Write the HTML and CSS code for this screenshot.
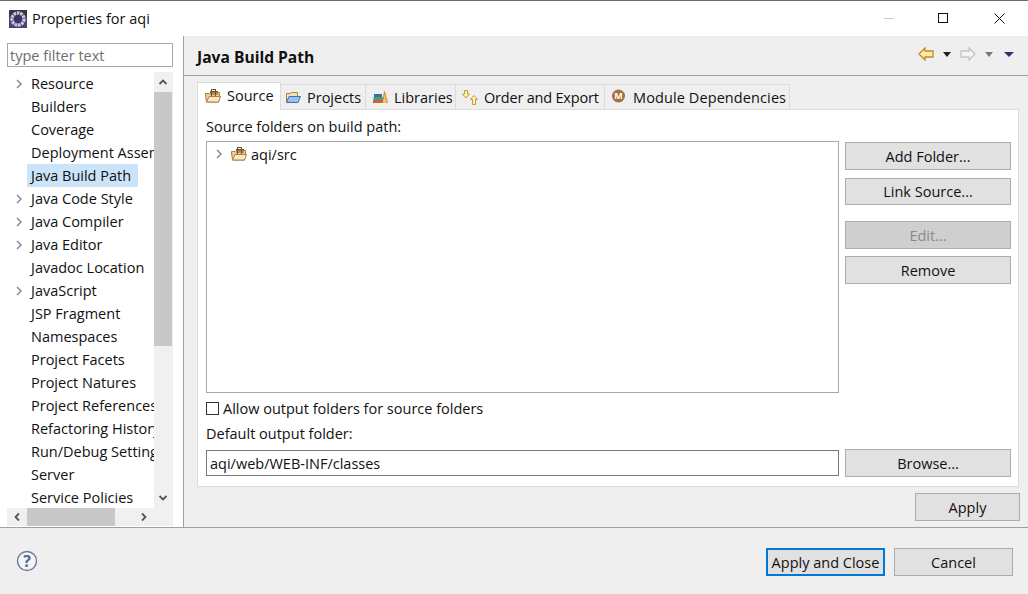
FILE: index.html
```html
<!DOCTYPE html>
<html lang="en">
<head>
<meta charset="utf-8">
<title>Properties for aqi</title>
<link rel="stylesheet" href="styles.css">
</head>
<body>
<svg class="defs" width="0" height="0" aria-hidden="true">
  <symbol id="pkg" viewBox="0 0 16 16">
    <path d="M1.5 14 L.5 7 V5.5 H4 L5 4.5 H14.5 V8 L13.5 14 Z" fill="#edcf96" stroke="#a9803f"/>
    <path d="M1.5 14 L4 8.5 H15.5 L13.5 14 Z" fill="#fae8c4" stroke="#a9803f"/>
    <path d="M6.5 1.5 V8 M10.5 1.5 V8 M5 3.5 H13 M5 6 H13 M6 1.5 H11" stroke="#70502a" stroke-width="1" fill="none"/>
  </symbol>
</svg>
<div class="window">
  <header class="titlebar">
    <svg class="app-icon" width="18" height="18" viewBox="0 0 18 18">
      <rect width="18" height="18" fill="#4d3f7f"/>
      <rect width="18" height="7" fill="#3a3448"/>
      <circle cx="9" cy="9" r="6" fill="none" stroke="#c9c9cf" stroke-width="3.4" stroke-dasharray="2.6 .7"/>
      <circle cx="9" cy="9" r="4.2" fill="#3d3268"/>
    </svg>
    <span class="title">Properties for aqi</span>
    <div class="win-controls">
      <svg class="win-min" width="11" height="11" viewBox="0 0 11 11"><path d="M0 5.5H10" stroke="#c8c8c8"/></svg>
      <svg width="11" height="11" viewBox="0 0 11 11"><rect x=".5" y=".5" width="9" height="9" fill="none" stroke="#111"/></svg>
      <svg width="11" height="11" viewBox="0 0 11 11"><path d="M.5 .5L10.5 10.5M10.5 .5L.5 10.5" stroke="#111"/></svg>
    </div>
  </header>

  <div class="main">
    <aside class="sidebar">
      <input class="filter" type="text" placeholder="type filter text">
      <div class="tree-wrap">
        <ul class="nav">
          <li><svg class="chev" viewBox="0 0 8 10"><path d="M2 1L6 5L2 9" /></svg>Resource</li>
          <li>Builders</li>
          <li>Coverage</li>
          <li>Deployment Assembly</li>
          <li class="selected"><span>Java Build Path</span></li>
          <li><svg class="chev" viewBox="0 0 8 10"><path d="M2 1L6 5L2 9" /></svg>Java Code Style</li>
          <li><svg class="chev" viewBox="0 0 8 10"><path d="M2 1L6 5L2 9" /></svg>Java Compiler</li>
          <li><svg class="chev" viewBox="0 0 8 10"><path d="M2 1L6 5L2 9" /></svg>Java Editor</li>
          <li>Javadoc Location</li>
          <li><svg class="chev" viewBox="0 0 8 10"><path d="M2 1L6 5L2 9" /></svg>JavaScript</li>
          <li>JSP Fragment</li>
          <li>Namespaces</li>
          <li>Project Facets</li>
          <li>Project Natures</li>
          <li>Project References</li>
          <li>Refactoring History</li>
          <li>Run/Debug Settings</li>
          <li>Server</li>
          <li>Service Policies</li>
        </ul>
        <div class="vscroll">
          <svg class="sb-arrow" viewBox="0 0 18 20"><path d="M5.5 12L9 8.5L12.5 12" /></svg>
          <div class="vthumb"></div>
          <svg class="sb-arrow" viewBox="0 0 18 20"><path d="M5.5 8L9 11.5L12.5 8" /></svg>
        </div>
        <div class="hscroll">
          <svg class="sb-arrow-h" viewBox="0 0 20 18"><path d="M12 5.5L8.5 9L12 12.5" /></svg>
          <div class="hthumb"></div>
          <svg class="sb-arrow-h" viewBox="0 0 20 18"><path d="M8 5.5L11.5 9L8 12.5" /></svg>
        </div>
      </div>
    </aside>

    <section class="page">
      <div class="page-head">
        <h1>Java Build Path</h1>
        <div class="page-tools">
          <svg width="16" height="14" viewBox="0 0 16 14"><path d="M7 1L1 7L7 13V10H15V4H7Z" fill="#fdeaa8" stroke="#c58a1e" stroke-width="1.3"/></svg>
          <i class="caret"></i>
          <svg width="16" height="14" viewBox="0 0 16 14"><path d="M9 1L15 7L9 13V10H1V4H9Z" fill="#f4f4f4" stroke="#c4c4c4" stroke-width="1.3"/></svg>
          <i class="caret muted"></i>
          <i class="caret menu"></i>
        </div>
      </div>
      <div class="page-body">
        <nav class="tabs">
          <div class="tab active"><svg class="ico"><use href="#pkg"/></svg>Source</div>
          <div class="tab t-projects">
            <svg class="ico" viewBox="0 0 16 16"><path d="M1.5 13V4.5H5.5L6.5 3.5H12.5V7" fill="#f6e2b8" stroke="#a9803f"/><path d="M1.5 13.5L4 7.5H15.5L13 13.5Z" fill="#9cc0ea" stroke="#3f6fb5"/></svg>Projects
          </div>
          <div class="tab t-libs">
            <svg class="ico" viewBox="0 0 16 16"><rect x="1" y="11" width="11" height="3" fill="#c0673a"/><rect x="1.5" y="8" width="10" height="3" fill="#4f9a8a"/><rect x="2" y="5" width="8" height="3" fill="#3f6f8f"/><path d="M10.5 14L12.5 2.5L15.5 14" fill="#f2c46a" stroke="#d08a2a"/></svg>Libraries
          </div>
          <div class="tab t-order">
            <svg class="ico" viewBox="0 0 16 16"><path d="M2.5 1.5H5.5V5H7.5L4 9L.5 5H2.5Z" fill="#fdf0c0" stroke="#c59a2e"/><path d="M10.5 15.5H13.5V10.5H15.5L12 6.5L8.5 10.5H10.5Z" fill="#fdf0c0" stroke="#c59a2e"/></svg>Order and Export
          </div>
          <div class="tab t-mod">
            <svg class="ico" viewBox="0 0 16 16"><circle cx="7.5" cy="7" r="6.5" fill="#a5703a"/><text x="7.5" y="10" text-anchor="middle" class="mod-m">M</text></svg>Module Dependencies
          </div>
        </nav>
        <div class="panel">
          <div class="panel-label">Source folders on build path:</div>
          <div class="panel-row">
            <div class="source-tree">
              <div class="source-item">
                <svg class="chev" viewBox="0 0 8 10"><path d="M2 1L6 5L2 9" /></svg>
                <svg class="ico"><use href="#pkg"/></svg>
                aqi/src
              </div>
            </div>
            <div class="side-btns">
              <button class="btn">Add Folder...</button>
              <button class="btn short">Link Source...</button>
              <button class="btn disabled">Edit...</button>
              <button class="btn">Remove</button>
            </div>
          </div>
          <label class="check"><span class="box"></span>Allow output folders for source folders</label>
          <div class="output-label">Default output folder:</div>
          <div class="output-row">
            <input class="output" type="text" value="aqi/web/WEB-INF/classes">
            <button class="btn browse">Browse...</button>
          </div>
        </div>
        <div class="apply-row"><button class="btn apply">Apply</button></div>
      </div>
    </section>
  </div>

  <footer class="footer">
    <svg class="help" width="22" height="22" viewBox="0 0 22 22">
      <circle cx="11" cy="11" r="9.5" fill="#f4f5f8" stroke="#6b7d9c" stroke-width="1.4"/>
      <text x="11" y="16.5" text-anchor="middle" class="help-q">?</text>
    </svg>
    <div class="footer-btns">
      <button class="btn default">Apply and Close</button>
      <button class="btn cancel">Cancel</button>
    </div>
  </footer>
</div>
</body>
</html>
```
FILE: styles.css
```css
* { box-sizing: border-box; }
html, body { margin: 0; padding: 0; }
body {
  width: 1028px;
  height: 594px;
  overflow: hidden;
  background: #fff;
  color: #111;
  font-family: "Open Sans", "Noto Sans", "Liberation Sans", sans-serif;
  font-size: 14.5px;
}
.defs { position: absolute; }
.window {
  width: 1028px;
  height: 594px;
  display: flex;
  flex-direction: column;
  border-top: 1px solid #6a6a6a;
}
.titlebar {
  height: 35px;
  flex: none;
  display: flex;
  align-items: center;
  padding-left: 9px;
  background: #fff;
}
.app-icon { margin-right: 5px; }
.win-controls {
  margin-left: auto;
  display: flex;
  align-items: center;
  gap: 45px;
  padding-right: 23px;
}
.win-min { margin-right: -2px; }
.main { flex: none; height: 491px; display: flex; }
.sidebar {
  width: 184px;
  flex: none;
  border-right: 1px solid #a0a0a0;
  padding: 7px 0 0 7px;
  display: flex;
  flex-direction: column;
}
.filter {
  width: 166px;
  height: 24px;
  border: 1px solid #a8a8a8;
  padding: 0 2px;
  font: inherit;
  color: #111;
  outline: none;
}
.filter::placeholder { color: #6e6e6e; opacity: 1; }
.tree-wrap {
  margin-top: 5px;
  width: 166px;
  height: 454px;
  display: grid;
  grid-template-columns: 147px 19px;
  grid-template-rows: 436px 18px;
}
.nav {
  list-style: none;
  margin: 0;
  padding: 1px 0 0;
  overflow: hidden;
  white-space: nowrap;
}
.nav li {
  height: 23px;
  line-height: 22px;
  padding-left: 24px;
  position: relative;
}
.nav .selected { display: flow-root; }
.nav .chev { position: absolute; left: 8px; top: 6px; }
.chev {
  width: 8px;
  height: 10px;
  fill: none;
  stroke: #8c8c8c;
  stroke-width: 1.5;
}
.nav .selected span {
  display: block;
  width: 111px;
  height: 23px;
  padding-left: 4px;
  margin: -1px 0 0 -4px;
  line-height: 24px;
  background: #cce4f9;
}
.vscroll {
  background: #f0f0f0;
  display: flex;
  flex-direction: column;
  justify-content: space-between;
}
.vthumb { height: 254px; margin-bottom: auto; width: 18px; background: #c8c8c8; }
.sb-arrow, .sb-arrow-h { fill: none; stroke: #555; stroke-width: 1.8; flex: none; }
.sb-arrow { width: 18px; height: 20px; }
.sb-arrow-h { width: 20px; height: 18px; }
.hscroll {
  grid-column: 1 / 3;
  background: #f0f0f0;
  display: flex;
  justify-content: space-between;
  padding-right: 19px;
}
.hthumb { width: 88px; background: #c8c8c8; margin-right: auto; }
.page { flex: 1; background: #efefef; display: flex; flex-direction: column; }
.page-head {
  height: 40px;
  flex: none;
  border-bottom: 1px solid #a0a0a0;
  display: flex;
  align-items: center;
  padding: 3px 0 0 13px;
}
h1 { margin: 0; font-size: 15.6px; font-weight: 700; }
.page-tools {
  margin-left: auto;
  display: flex;
  align-items: center;
  gap: 9px;
  padding-right: 14px;
  margin-top: -6px;
}
.caret {
  display: block;
  width: 0;
  height: 0;
  border-left: 4px solid transparent;
  border-right: 4px solid transparent;
  border-top: 5px solid #222;
}
.caret.muted { border-top-color: #777; }
.caret.menu { border-left-width: 5px; border-right-width: 5px; border-top-color: #3b2a78; margin-left: 2px; }
.page-body { padding: 6px 8px 0 13px; }
.tabs { display: flex; align-items: flex-end; height: 27px; }
.tab {
  height: 25px;
  background: #efefef;
  border: 1px solid #dcdcdc;
  border-left: 0;
  border-bottom: 0;
  display: flex;
  align-items: center;
  white-space: nowrap;
}
.tab .ico { margin: 0 6px 0 4px; }
.ico { width: 16px; height: 16px; flex: none; }
.tab.active {
  width: 84px;
  height: 28px;
  background: #fff;
  border-left: 1px solid #dcdcdc;
  padding: 0 0 2px 3px;
  margin-bottom: -1px;
  position: relative;
}
.t-projects { width: 85px; }
.t-libs { width: 90px; padding-left: 2px; }
.t-order { width: 149px; padding-left: 2px; letter-spacing: -0.2px; }
.t-mod { width: 185px; padding-left: 2px; letter-spacing: 0.1px; }
.mod-m { font-size: 9px; font-weight: 700; fill: #fff; }
.panel {
  width: 822px;
  height: 378px;
  background: #fff;
  border: 1px solid #dcdcdc;
  padding: 7px 7px 0 8px;
}
.panel-label { height: 24px; line-height: 20px; }
.panel-row { display: flex; gap: 6px; height: 252px; }
.source-tree { width: 633px; height: 252px; border: 1px solid #a8a8a8; padding-top: 2px; }
.source-item { display: flex; align-items: center; height: 20px; padding-left: 8px; }
.source-item .chev { margin-right: 8px; }
.source-item .ico { margin-right: 4px; }
.side-btns { width: 166px; display: flex; flex-direction: column; padding-top: 1px; }
.btn {
  display: block;
  height: 28px;
  padding: 0;
  background: #e1e1e1;
  border: 1px solid #adadad;
  font: inherit;
  color: #111;
  text-align: center;
}
.side-btns .btn { width: 166px; margin-bottom: 8px; }
.side-btns .btn.short { height: 27px; margin-bottom: 9px; }
.side-btns .btn.disabled { margin-top: 7px; margin-bottom: 7px; }
.btn.disabled { background: #cfcfcf; color: #8a8a8a; }
.check { display: flex; align-items: center; height: 20px; margin-top: 5px; }
.box { width: 13px; height: 13px; border: 1px solid #333; background: #fff; margin-right: 4px; }
.output-label { height: 20px; line-height: 20px; margin-top: 6px; }
.output-row { display: flex; gap: 6px; margin-top: 6px; }
.output {
  width: 633px;
  height: 26px;
  border: 1px solid #7a7a7a;
  padding: 0 3px;
  font: inherit;
  color: #111;
  outline: none;
}
.browse { width: 166px; margin-top: -1px; }
.apply-row { display: flex; justify-content: flex-end; margin-top: 6px; }
.apply { width: 105px; }
.footer {
  flex: 1;
  background: #efefef;
  border-top: 1px solid #a0a0a0;
  display: flex;
  align-items: center;
  padding: 0 15px 0 16px;
}
.help-q { font-size: 16px; font-weight: 700; fill: #55688a; }
.footer-btns { margin-left: auto; margin-top: 2px; display: flex; gap: 9px; }
.default { width: 119px; border: 2px solid #0078d7; }
.cancel { width: 119px; }
```
